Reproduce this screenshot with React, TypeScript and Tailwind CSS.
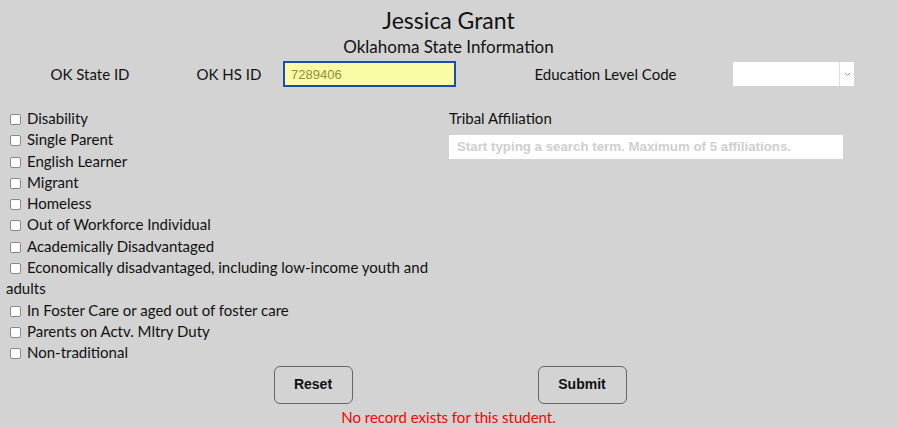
import React from "react";

const items = [
  "Disability",
  "Single Parent",
  "English Learner",
  "Migrant",
  "Homeless",
  "Out of Workforce Individual",
  "Academically Disadvantaged",
  "Economically disadvantaged, including low-income youth and adults",
  "In Foster Care or aged out of foster care",
  "Parents on Actv. Mltry Duty",
  "Non-traditional",
];

export default function App() {
  return (
    <div className="w-[897px] h-[427px] bg-[#d3d3d3] text-[#111] overflow-hidden font-['Lato',sans-serif]">
      <div className="pt-[6px] text-center text-[23px] leading-[28px]">Jessica Grant</div>
      <div className="text-center text-[17px] leading-[22px] mt-[2px]">Oklahoma State Information</div>
      <div className="flex items-center h-[26px] mt-[3px] text-[15px]">
        <div className="w-[180px] text-center">OK State ID</div>
        <div className="w-[98px] text-center">OK HS ID</div>
        <input
          readOnly
          value="7289406"
          className="ml-[5px] w-[173px] h-[26px] border-2 border-[#1a4ea8] bg-[#fafba6] px-[6px] text-[13px] text-[#8f8f3c] font-['Liberation_Sans',sans-serif] outline-none"
        />
        <div className="pl-[22px] w-[277px] text-center">Education Level Code</div>
        <div className="flex w-[121px] h-[24px] bg-white">
          <div className="flex-1"></div>
          <div className="w-[1px] bg-[#e0e0e0]"></div>
          <div className="w-[14px] flex items-center justify-center">
            <svg width="7" height="5" viewBox="0 0 7 5">
              <path d="M1 1 L3.5 3.5 L6 1" fill="none" stroke="#999" strokeWidth="1" />
            </svg>
          </div>
        </div>
      </div>
      <div className="flex mt-[21px]">
        <div className="w-[449px] pl-[6px] text-[15px] leading-[21.3px]">
          {items.map((t) => (
            <div key={t}>
              <input type="checkbox" className="w-[11px] h-[11px] ml-[4px] mr-[6px] align-[-1px] appearance-none bg-white border border-[#888] rounded-[2px]" />
              {t}
            </div>
          ))}
        </div>
        <div>
          <div className="text-[15px] leading-[21px]">Tribal Affiliation</div>
          <div className="mt-[6px] w-[394px] h-[24px] bg-white flex items-center pl-[8px] text-[13.3px] font-bold text-[#cfcfcf] font-['Liberation_Sans',sans-serif]">
            Start typing a search term. Maximum of 5 affiliations.
          </div>
        </div>
      </div>
      <div className="flex justify-center gap-[185px] mt-[2px] pl-[3px]">
        <button className="w-[79px] h-[38px] border border-[#666] rounded-[6px] font-bold text-[14px] font-['Liberation_Sans',sans-serif] text-[#111]">Reset</button>
        <button className="w-[89px] h-[38px] border border-[#666] rounded-[6px] font-bold text-[14px] font-['Liberation_Sans',sans-serif] text-[#111]">Submit</button>
      </div>
      <div className="mt-[3px] text-center text-[15px] leading-[20px] text-[#ff0000]">No record exists for this student.</div>
    </div>
  );
}
